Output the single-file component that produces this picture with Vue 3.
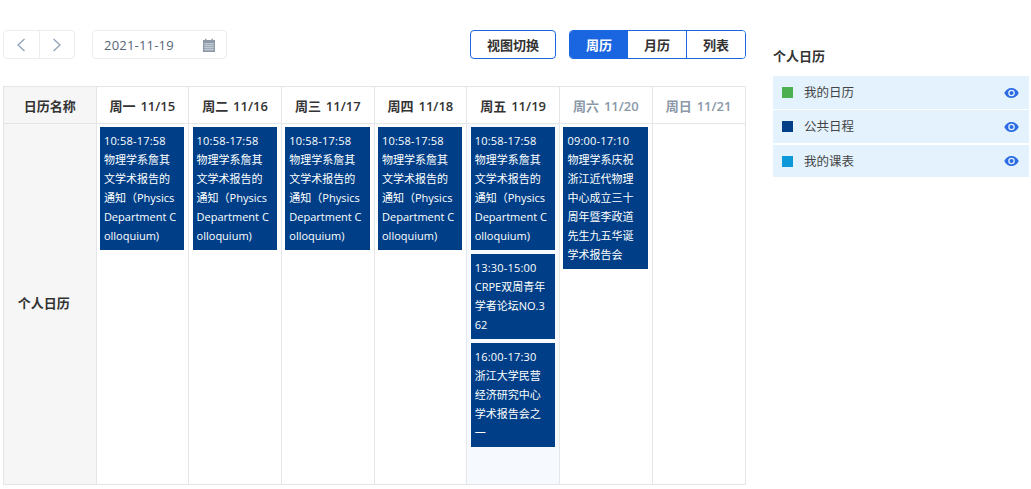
<script setup>
const p = { time: '10:58-17:58', title: '物理学系詹其文学术报告的通知（Physics Department Colloquium)' }
const days = [
  { label: '周一 11/15', events: [p] },
  { label: '周二 11/16', events: [p] },
  { label: '周三 11/17', events: [p] },
  { label: '周四 11/18', events: [p] },
  { label: '周五 11/19', today: true, events: [p,
    { time: '13:30-15:00', title: 'CRPE双周青年学者论坛NO.362' },
    { time: '16:00-17:30', title: '浙江大学民营经济研究中心学术报告会之一' }] },
  { label: '周六 11/20', weekend: true, events: [{ time: '09:00-17:10', title: '物理学系庆祝浙江近代物理中心成立三十周年暨李政道先生九五华诞学术报告会' }] },
  { label: '周日 11/21', weekend: true, events: [] }
]
const cals = [
  { name: '我的日历', color: '#4caf50' },
  { name: '公共日程', color: '#003f88' },
  { name: '我的课表', color: '#0d98da' }
]
</script>

<template>
  <div class="page">
    <main class="main">
      <div class="toolbar">
        <div class="pager">
          <button class="pg"><svg width="10" height="14" viewBox="0 0 10 14"><path d="M8.5 1 2 7l6.500 6" fill="none" stroke="#8fa3bb" stroke-width="1.300"/></svg></button>
          <button class="pg"><svg width="10" height="14" viewBox="0 0 10 14"><path d="M1.500 1 8 7l-6.500 6" fill="none" stroke="#8fa3bb" stroke-width="1.300"/></svg></button>
        </div>
        <div class="date">
          <span class="date-text">2021-11-19</span>
          <svg width="14" height="14" viewBox="0 0 14 14"><path d="M1 2h2V.8h1.500V2h5V.8H11V2h2v12H1z" fill="#8e9aa8"/><path d="M2 5.500h10M2 7.500h10M2 9.500h10M2 11.500h10M4 5v8M6 5v8M8 5v8M10 5v8" stroke="#d5dbe1" stroke-width=".6"/></svg>
        </div>
        <div class="spacer"></div>
        <button class="switch">视图切换</button>
        <div class="seg">
          <button class="seg-btn active">周历</button>
          <button class="seg-btn">月历</button>
          <button class="seg-btn">列表</button>
        </div>
      </div>
      <table class="cal">
        <thead>
          <tr>
            <th class="name">日历名称</th>
            <th v-for="d in days" :key="d.label" :class="{ weekend: d.weekend }">{{ d.label }}</th>
          </tr>
        </thead>
        <tbody>
          <tr>
            <td class="name rowname">个人日历</td>
            <td v-for="d in days" :key="d.label" class="day" :class="{ today: d.today }">
              <div v-for="e in d.events" :key="e.time" class="event">
                <div class="time">{{ e.time }}</div>
                <div>{{ e.title }}</div>
              </div>
            </td>
          </tr>
        </tbody>
      </table>
    </main>
    <aside class="side">
      <h3 class="side-title">个人日历</h3>
      <div v-for="c in cals" :key="c.name" class="cal-row">
        <span class="swatch" :style="{ background: c.color }"></span>
        <span class="cal-name">{{ c.name }}</span>
        <svg class="eye" width="15" height="10" viewBox="0 0 15 10"><path fill-rule="evenodd" d="M7.500 0C4.300 0 1.600 2 .3 5c1.300 3 4 5 7.200 5s5.900-2 7.200-5C13.400 2 10.700 0 7.500 0zm0 8.300a3.300 3.300 0 1 1 0-6.600 3.300 3.300 0 0 1 0 6.600z" fill="#2b6be4"/><circle cx="7.500" cy="5" r="2" fill="#2b6be4"/></svg>
      </div>
    </aside>
  </div>
</template>

<style>
html, body { background: #fff; overflow: hidden; }
</style>

<style scoped>
.page { display: flex; width: 1031px; height: 489px; font-family: "Open Sans", "Noto Sans CJK SC", sans-serif; color: #333; font-size: 13px; box-sizing: border-box; padding: 30px 2px 0 3px; overflow: hidden; }
.main { width: 743px; flex: none; }
.toolbar { display: flex; align-items: flex-start; height: 56px; }
.pager { display: flex; border: 1px solid #ebeef1; border-radius: 4px; height: 29px; box-sizing: border-box; width: 72px; }
.pg { flex: 1; border: 0; background: none; padding: 0; display: flex; align-items: center; justify-content: center; }
.pg + .pg { border-left: 1px solid #ebeef1; }
.date { margin-left: 17px; width: 135px; height: 29px; box-sizing: border-box; border: 1px solid #ebeef1; border-radius: 4px; display: flex; align-items: center; justify-content: space-between; padding: 0 10px 0 11px; }
.date-text { color: #566577; font-size: 13px; letter-spacing: .2px; }
.spacer { flex: 1; }
.switch { width: 86px; height: 29px; background: #fff; border: 1px solid #1a66e0; border-radius: 4px; font: 600 13px "Open Sans", "Noto Sans CJK SC", sans-serif; color: #333; padding: 0; }
.seg { margin-left: 13px; display: flex; height: 29px; box-sizing: border-box; border: 1px solid #1a66e0; border-radius: 4px; overflow: hidden; width: 177px; }
.seg-btn { flex: 1; background: #fff; border: 0; font: 600 13px "Open Sans", "Noto Sans CJK SC", sans-serif; color: #333; padding: 0; }
.seg-btn + .seg-btn { border-left: 1px solid #1a66e0; }
.seg-btn.active { background: #1a66e0; color: #fff; flex: none; width: 58px; }
.seg-btn.active + .seg-btn { border-left: 0; }
.cal { border-collapse: collapse; table-layout: fixed; width: 742.500px; height: 399px; }
.cal th, .cal td { border: 1px solid #e4e6e9; box-sizing: border-box; padding: 0; }
.cal th { height: 37px; font-size: 13px; font-weight: 600; color: #333; background: #fff; word-spacing: 1.500px; }
.cal th.name, .cal td.name { background: #f6f6f6; width: 92.500px; }
.cal th.weekend { color: #8a98a8; }
.cal td.rowname { font-weight: 600; font-size: 13px; text-align: center; padding: 0 12px 3px 0; }
.day { vertical-align: top; padding: 3px 4px 0 3.400px !important; }
.day.today { background: #f6faff; }
.event { background: #003f88; color: #fff; font-size: 11px; line-height: 19px; padding: 4px 7px 5px 4px; margin-bottom: 4px; word-break: break-all; }
.time { letter-spacing: .2px; }
.side { margin-left: 27px; flex: 1; padding-top: 16px; }
.side-title { margin: 0 0 10px; font-size: 13px; line-height: 20px; font-weight: 600; color: #333; }
.cal-row { display: flex; align-items: center; height: 33px; margin-bottom: 1px; background: #e3f2fd; padding: 0 10px 0 9px; }
.cal-row:last-child { height: 32px; margin-top: 2px; }
.swatch { width: 11px; height: 11px; flex: none; }
.cal-name { margin-left: 11px; flex: 1; color: #444; font-size: 12.500px; padding-bottom: 2px; }
</style>
